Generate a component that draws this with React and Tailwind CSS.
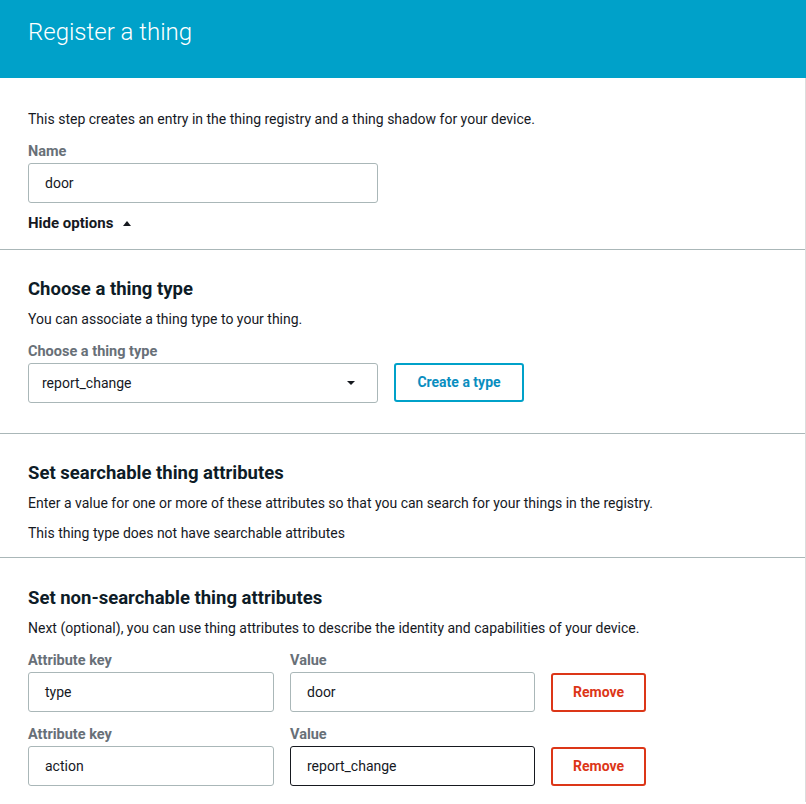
import React from 'react';

const font = { fontFamily: 'Roboto, "Liberation Sans", sans-serif' };

function Label({ children }) {
    return <div className="text-[14.5px] font-bold text-[#687078] leading-4 mb-[3px]">{children}</div>;
}

function TextBox({ value, focused, className = '' }) {
    return (
        <div
            className={`h-[40px] flex items-center pl-[16px] rounded-[3px] border text-[14px] text-[#16191f] bg-white ${focused ? 'border-[#16191f]' : 'border-[#aab7b8]'} ${className}`}
        >
            {value}
        </div>
    );
}

function Section({ title, children, className = '' }) {
    return (
        <div className={`px-[28px] ${className}`}>
            <h2 className="text-[18.5px] font-bold text-[#0e1c27] leading-6 mb-[10px]">{title}</h2>
            {children}
        </div>
    );
}

function AttributeRow({ keyName, value, focused, className = '' }) {
    return (
        <div className={`flex items-end gap-[16px] ${className}`}>
            <div className="w-[246px]">
                <Label>Attribute key</Label>
                <TextBox value={keyName} />
            </div>
            <div className="w-[245px]">
                <Label>Value</Label>
                <TextBox value={value} focused={focused} />
            </div>
            <button className="w-[95px] h-[39px] rounded-[3px] border-2 border-[#dc3618] text-[#dc3618] text-[14px] font-bold">
                Remove
            </button>
        </div>
    );
}

export default function App() {
    return (
        <div style={font} className="w-[806px] min-h-[804px] bg-white">
            <div className="h-[78px] bg-[#00a1c9] px-[28px] pt-[16px]">
                <h1 className="text-[24px] font-light text-white leading-8">Register a thing</h1>
            </div>

            <div className="border-r border-[#dcdcdc] w-[806px]">
                <div className="px-[28px] pt-[33px] pb-[16px] border-b border-[#aab7b8]">
                    <p className="text-[14px] text-[#16191f] leading-4">
                        This step creates an entry in the thing registry and a thing shadow for your device.
                    </p>
                    <div className="mt-[17px]">
                        <Label>Name</Label>
                        <TextBox value="door" className="w-[350px]" />
                    </div>
                    <div className="flex items-center gap-[10px] mt-[10px] h-[20px] text-[15px] font-bold text-[#16191f]">
                        <span>Hide options</span>
                        <svg width="8" height="5" viewBox="0 0 8 5"><path d="M0 5 L4 0 L8 5 Z" fill="#16191f" /></svg>
                    </div>
                </div>

                <Section title="Choose a thing type" className="pt-[27px] pb-[30px] border-b border-[#aab7b8]">
                    <p className="text-[14px] text-[#16191f] leading-4">You can associate a thing type to your thing.</p>
                    <div className="flex items-end gap-[16px] mt-[17px]">
                        <div className="w-[350px]">
                            <Label>Choose a thing type</Label>
                            <div className="h-[40px] flex items-center justify-between pl-[13px] pr-[22px] rounded-[3px] border border-[#aab7b8] text-[14px] text-[#16191f]">
                                <span>report_change</span>
                                <svg width="8" height="4" viewBox="0 0 8 4"><path d="M0 0 L8 0 L4 4 Z" fill="#16191f" /></svg>
                            </div>
                        </div>
                        <button className="w-[130px] h-[39px] mb-[1px] rounded-[3px] border-2 border-[#00a1c9] text-[#0a8ebf] text-[14px] font-bold">
                            Create a type
                        </button>
                    </div>
                </Section>

                <Section title="Set searchable thing attributes" className="pt-[27px] pb-[16px] border-b border-[#aab7b8]">
                    <p className="text-[14px] text-[#16191f] leading-4">
                        Enter a value for one or more of these attributes so that you can search for your things in the registry.
                    </p>
                    <p className="text-[14px] text-[#16191f] leading-4 mt-[14px]">This thing type does not have searchable attributes</p>
                </Section>

                <Section title="Set non-searchable thing attributes" className="pt-[28px] pb-[16px]">
                    <p className="text-[14px] text-[#16191f] leading-4">
                        Next (optional), you can use thing attributes to describe the identity and capabilities of your device.
                    </p>
                    <AttributeRow keyName="type" value="door" className="mt-[17px]" />
                    <AttributeRow keyName="action" value="report_change" focused className="mt-[15px]" />
                </Section>
            </div>
        </div>
    );
}
